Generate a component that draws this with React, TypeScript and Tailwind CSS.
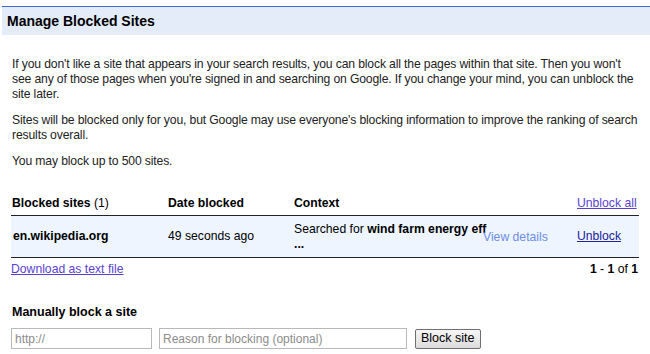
const links = {
  visited: "text-[#5b3fd3] underline",
  plain: "text-[#22229c] underline",
};

export default function App() {
  return (
    <div className="w-[650px] h-[354px] bg-white overflow-hidden font-['Liberation_Sans',Arial,sans-serif] text-[#000]">
      {/* title bar */}
      <div className="mt-[6px] ml-[2px] h-[29px] border-t border-[#3a6bd0] bg-[#e5ecf9] flex items-center pl-[5px]">
        <h1 className="text-[14px] font-bold text-[#000] leading-none">Manage Blocked Sites</h1>
      </div>

      <div className="px-[12px] pt-[22px] text-[12.2px] tracking-[-0.15px] leading-[15px] text-[#222]">
        <p>
          If you don't like a site that appears in your search results, you can block all the pages within that site. Then you won't
          see any of those pages when you're signed in and searching on Google. If you change your mind, you can unblock the site later.
        </p>
        <p className="mt-[11px]">
          Sites will be blocked only for you, but Google may use everyone's blocking information to improve the ranking of search
          results overall.
        </p>
        <p className="mt-[11px]">You may block up to 500 sites.</p>
      </div>

      {/* blocked list */}
      <div className="mx-[11px] mt-[22px] w-[628px] text-[12.2px]">
        <div className="flex items-center h-[25px] border-b border-[#222] font-bold">
          <div className="w-[157px] pl-[1px]">
            Blocked sites <span className="font-normal">(1)</span>
          </div>
          <div className="w-[126px]">Date blocked</div>
          <div className="w-[283px]">Context</div>
          <div className="flex-1">
            <a className={`${links.visited} font-normal`}>Unblock all</a>
          </div>
        </div>
        <div className="flex items-center h-[42px] bg-[#eef5ff] border-b border-[#222]">
          <div className="w-[157px] pl-[2px] font-bold">en.wikipedia.org</div>
          <div className="w-[126px]">49 seconds ago</div>
          <div className="w-[189px] whitespace-nowrap leading-[15px]">
            Searched for <b>wind farm energy eff</b>
            <br />
            <b>...</b>
          </div>
          <div className="w-[94px] pt-[2px] text-[#6f8ee6]">View details</div>
          <div className="flex-1">
            <a className={links.plain}>Unblock</a>
          </div>
        </div>
        <div className="flex items-center justify-between h-[23px]">
          <a className={links.visited}>Download as text file</a>
          <span className="pr-[1px]">
            <b>1</b> - <b>1</b> of <b>1</b>
          </span>
        </div>
      </div>

      {/* manual block */}
      <div className="px-[12px] mt-[24px]">
        <h2 className="text-[12.5px] font-bold leading-[15px]">Manually block a site</h2>
        <div className="flex items-center mt-[8px] -ml-[1px]">
          <input
            placeholder="http://"
            className="w-[141px] h-[21px] border border-[#b9b9b9] px-[3px] text-[12px] placeholder:text-[#8c8c8c] outline-none"
          />
          <input
            placeholder="Reason for blocking (optional)"
            className="ml-[7px] w-[248px] h-[21px] border border-[#b9b9b9] px-[3px] text-[12px] placeholder:text-[#8c8c8c] outline-none"
          />
          <button className="ml-[8px] h-[20px] px-[5px] text-[12.5px] border border-[#707070] rounded-[2px] bg-gradient-to-b from-[#f6f6f6] to-[#dcdcdc] leading-none">
            Block site
          </button>
        </div>
      </div>
    </div>
  );
}
